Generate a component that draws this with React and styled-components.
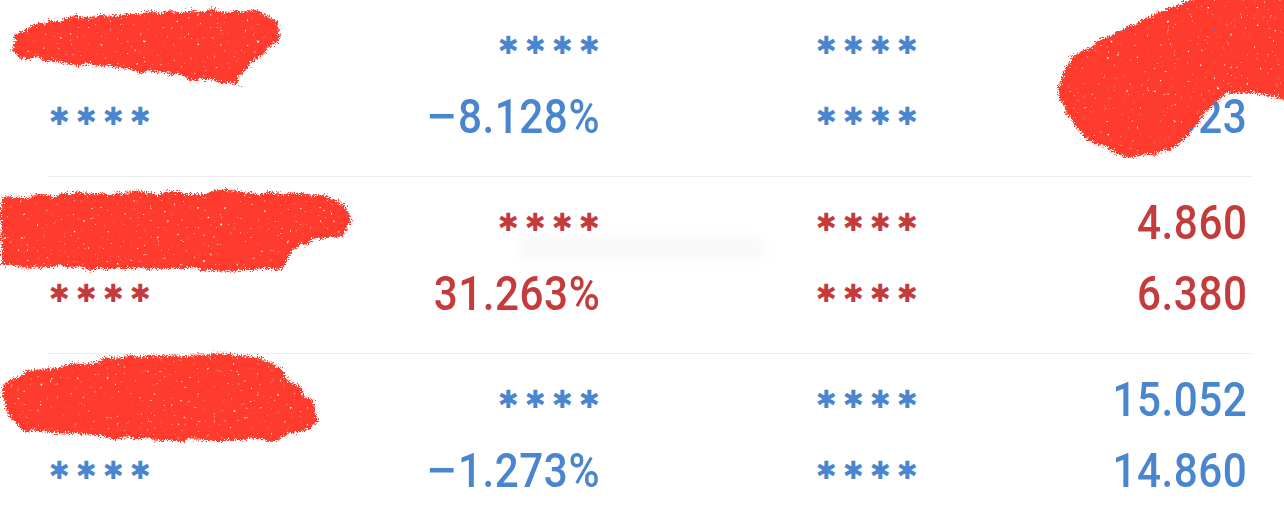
import React from 'react'
import styled, { createGlobalStyle } from 'styled-components'

const GlobalStyle = createGlobalStyle`
  html, body {
    margin: 0;
    padding: 0;
    background: #ffffff;
  }
  body {
    font-family: Roboto, "DejaVu Sans Condensed", "Liberation Sans", sans-serif;
  }
`

const colors = {
  down: '#4a86cf',
  up: '#c43b3c',
  line: '#eeeeee',
  ink: '#ff3a2e'
}

const Page = styled.div`
  position: relative;
  width: 1284px;
  height: 510px;
  overflow: hidden;
  background: #fff;
`

const List = styled.div`
  padding: 0 32px 0 48px;
  display: flex;
  flex-direction: column;
`

const Row = styled.div`
  display: grid;
  grid-template-columns: 352px 196px 315px 332px;
  grid-template-rows: 71px 71px;
  padding: 10px 4px 24px 4px;
  border-bottom: ${p => (p.last ? 'none' : `1px solid ${colors.line}`)};
  color: ${p => (p.up ? colors.up : colors.down)};
`

const Cell = styled.div`
  display: flex;
  align-items: center;
  justify-content: ${p => (p.left ? 'flex-start' : 'flex-end')};
`

const Value = styled.span`
  display: inline-block;
  white-space: nowrap;
  font-size: 48px;
  font-weight: 500;
  line-height: 1;
  letter-spacing: 0.6px;
  transform: scaleX(0.88);
  transform-origin: right center;
`

const Minus = styled.span`
  display: inline-block;
  transform: scaleX(1.35);
  transform-origin: right center;
  margin-left: 8px;
`

const Stars = styled.span`
  display: flex;
  gap: 12px;
  margin-right: ${p => (p.left ? 0 : 3)}px;
`

const Star = styled.span`
  display: flex;
  justify-content: center;
  width: 15px;
  font-family: "DejaVu Sans", sans-serif;
  font-size: 25px;
  font-weight: bold;
  line-height: 1;
`

const Overlay = styled.svg`
  position: absolute;
  left: 0;
  top: 0;
  pointer-events: none;
`

const rows = [
  { up: false, top: [null, '****', '****', '15.023'], bottom: ['****', '−8.128%', '****', '15.023'] },
  { up: true, top: [null, '****', '****', '4.860'], bottom: ['****', '31.263%', '****', '6.380'] },
  { up: false, top: [null, '****', '****', '15.052'], bottom: ['****', '−1.273%', '****', '14.860'] }
]

const renderValue = text => {
  if (text.startsWith('−')) {
    return <Value><Minus>−</Minus>{text.slice(1)}</Value>
  }
  return <Value>{text}</Value>
}

const renderCell = (text, i) => {
  if (!text) return <Cell key={i} left />
  const isStars = text === '****'
  return (
    <Cell key={i} left={i === 0}>
      {isStars
        ? <Stars left={i !== 1}>{[0, 1, 2, 3].map(n => <Star key={n}>✱</Star>)}</Stars>
        : renderValue(text)}
    </Cell>
  )
}

const blobs = [
  'M14 36 C30 18 90 16 160 13 C210 10 250 8 272 18 C284 28 280 45 262 54 C250 58 246 70 238 84 C200 80 150 70 100 66 C60 62 20 62 12 52 Z',
  'M1 198 C60 192 200 190 300 194 C340 196 352 206 350 222 C348 238 330 240 298 242 C290 252 288 262 282 270 C200 270 100 268 2 266 Z',
  'M4 382 C30 368 90 360 160 355 C220 352 262 352 284 370 C296 385 316 400 316 418 C306 436 280 440 230 440 C160 440 60 436 22 428 C6 416 0 400 4 382 Z',
  'M1059 86 C1062 62 1090 42 1125 28 C1150 16 1175 6 1200 -4 L1290 -4 L1290 102 C1270 94 1242 88 1222 98 C1204 108 1196 124 1184 140 C1170 156 1140 160 1110 150 C1080 140 1060 116 1059 86 Z'
]

const Scribbles = () => (
  <Overlay width='1284' height='510' viewBox='0 0 1284 510'>
    <defs>
      <filter id='rough' x='-10%' y='-20%' width='120%' height='140%'>
        <feTurbulence type='fractalNoise' baseFrequency='0.06' numOctaves='3' seed='4' result='warp' />
        <feDisplacementMap in='SourceGraphic' in2='warp' scale='10' xChannelSelector='R' yChannelSelector='G' result='shape' />
        <feTurbulence type='fractalNoise' baseFrequency='0.7' numOctaves='2' seed='11' result='fuzz' />
        <feDisplacementMap in='shape' in2='fuzz' scale='9' xChannelSelector='R' yChannelSelector='G' result='fuzzy' />
        <feTurbulence type='fractalNoise' baseFrequency='0.3' numOctaves='2' seed='9' result='grain' />
        <feColorMatrix in='grain' type='matrix' values='0 0 0 0 0  0 0 0 0 0  0 0 0 0 0  6 0 0 0 -0.75' result='grainA' />
        <feComposite in='fuzzy' in2='grainA' operator='in' />
      </filter>
      <filter id='smudge' x='-20%' y='-100%' width='140%' height='300%'>
        <feGaussianBlur stdDeviation='6' />
      </filter>
    </defs>
    <rect x='520' y='238' width='245' height='22' fill='#e8e8e8' opacity='0.3' filter='url(#smudge)' />
    {blobs.map((d, i) => (
      <path key={i} d={d} fill={colors.ink} filter='url(#rough)' />
    ))}
  </Overlay>
)

export default function App () {
  return (
    <Page>
      <GlobalStyle />
      <List>
        {rows.map((r, idx) => (
          <Row key={idx} up={r.up} last={idx === rows.length - 1}>
            {r.top.map(renderCell)}
            {r.bottom.map(renderCell)}
          </Row>
        ))}
      </List>
      <Scribbles />
    </Page>
  )
}
